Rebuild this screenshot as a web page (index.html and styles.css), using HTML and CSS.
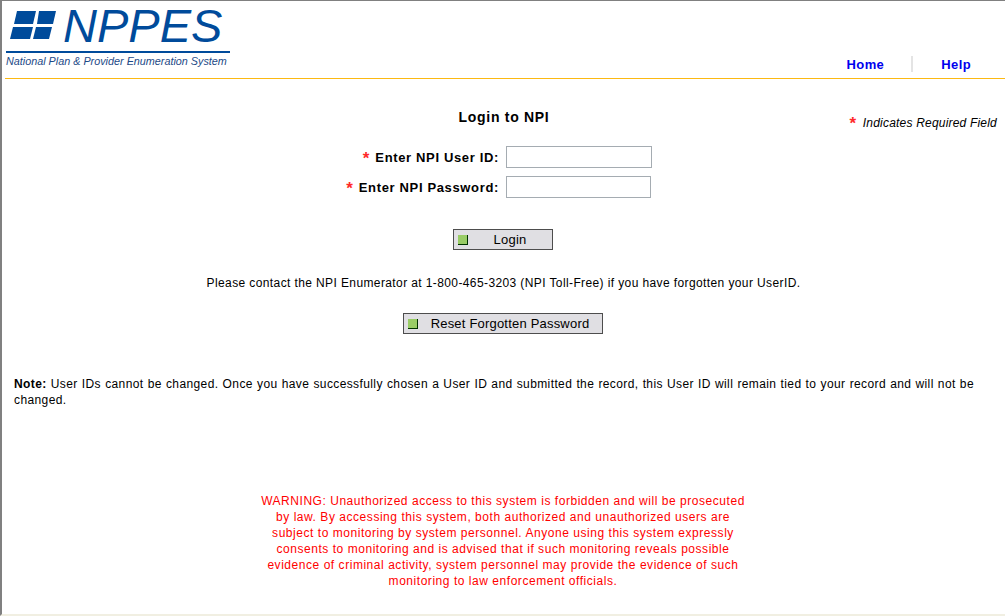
FILE: index.html
```html
<!DOCTYPE html>
<html lang="en">
  <head>
    <meta charset="UTF-8" />
    <title>NPPES Login</title>
    <link rel="stylesheet" href="styles.css">
  </head>
  <body>
    <div class="page">
      <div class="header">
        <div class="logo">
          <div class="logo-top">
            <svg class="logo-mark" width="46" height="28" viewBox="0 0 46 28">
              <polygon fill="#004b9b" points="7,0 26,0 23,13 4,13" />
              <polygon fill="#004b9b" points="29,0 46,0 43,13 27,13" />
              <polygon fill="#004b9b" points="3,16 23,16 20,28 0,28" />
              <polygon fill="#004b9b" points="26,16 42,16 39,28 23,28" />
            </svg>
            <span class="logo-name">NPPES</span>
          </div>
          <div class="logo-sub">National Plan &amp; Provider Enumeration System</div>
        </div>
        <div class="nav">
          <a class="nav-home" href="#">Home</a>
          <span class="nav-sep"></span>
          <a class="nav-help" href="#">Help</a>
        </div>
      </div>

      <div class="content">
        <p class="required-note"><span class="star">*</span> Indicates Required Field</p>
        <h1 class="title">Login to NPI</h1>

        <div class="field-row">
          <label class="field-label"><span class="star">*</span> Enter NPI User ID:</label>
          <input class="field-input user" type="text" />
        </div>
        <div class="field-row">
          <label class="field-label"><span class="star">*</span> Enter NPI Password:</label>
          <input class="field-input pass" type="password" />
        </div>

        <div class="login-wrap">
          <button class="btn login"><span class="bullet"></span><span class="btn-text">Login</span></button>
        </div>

        <p class="contact">Please contact the NPI Enumerator at 1-800-465-3203 (NPI Toll-Free) if you have forgotten your UserID.</p>

        <div class="reset-wrap">
          <button class="btn reset"><span class="bullet"></span><span class="btn-text">Reset Forgotten Password</span></button>
        </div>

        <p class="note"><b>Note:</b> User IDs cannot be changed. Once you have successfully chosen a User ID and submitted the record, this User ID will remain tied to your record and will not be changed.</p>

        <p class="warning">WARNING: Unauthorized access to this system is forbidden and will be prosecuted by law. By accessing this system, both authorized and unauthorized users are subject to monitoring by system personnel. Anyone using this system expressly consents to monitoring and is advised that if such monitoring reveals possible evidence of criminal activity, system personnel may provide the evidence of such monitoring to law enforcement officials.</p>
      </div>
    </div>
  </body>
</html>
```

FILE: styles.css
```css
html,
body {
  margin: 0;
  padding: 0;
  background-color: #ffffff;
}

body {
  font-family: "Liberation Sans", Arial, sans-serif;
  font-size: 12px;
  color: #000000;
}

.page {
  height: 613px;
  border-top: 1px solid #808080;
  border-left: 2px solid #808080;
  border-bottom: 2px solid #f1efe2;
  overflow: hidden;
}

.header {
  display: flex;
  justify-content: space-between;
  height: 77px;
  margin-left: 3px;
  border-bottom: 1px solid #fcb913;
}

.logo {
  width: 224px;
  padding-left: 1px;
}

.logo-top {
  display: flex;
  align-items: flex-start;
  height: 50px;
  border-bottom: 2px solid #004b9b;
}

.logo-mark {
  flex: none;
  margin: 10px 0 0 4px;
}

.logo-name {
  margin-left: 7px;
  font-size: 47px;
  line-height: 50px;
  font-style: italic;
  color: #004b9b;
}

.logo-sub {
  margin-top: 2px;
  font-size: 10.8px;
  font-style: italic;
  color: #1d4a87;
  white-space: nowrap;
}

.nav {
  display: flex;
  align-items: center;
  height: 16px;
  margin-top: 55px;
  padding-right: 34px;
  font-size: 13px;
  font-weight: bold;
  letter-spacing: 0.4px;
}

.nav a {
  color: #0000ee;
  text-decoration: none;
}

.nav-sep {
  width: 2px;
  height: 16px;
  margin: 0 28px 0 27px;
  background-color: #e4e4e4;
}

.content {
  position: relative;
  padding: 30px 4px 0 12px;
  letter-spacing: 0.39px;
}

.required-note {
  position: absolute;
  top: 37px;
  right: 8px;
  margin: 0;
  font-size: 12px;
  font-style: italic;
  letter-spacing: 0.2px;
}

.star {
  margin-right: 1px;
  color: #ff2a2a;
  font-size: 17px;
  font-style: normal;
  font-weight: bold;
  line-height: 12px;
  vertical-align: -2px;
}

.required-note .star {
  margin-right: 3px;
}

.title {
  margin: 0 7px 0 0;
  font-size: 14px;
  line-height: 16px;
  font-weight: bold;
  letter-spacing: 0.7px;
  text-align: center;
}

.field-row {
  display: flex;
  align-items: center;
  height: 22px;
  margin-top: 8px;
}

.title + .field-row {
  margin-top: 21px;
}

.field-label {
  width: 485px;
  font-size: 13px;
  font-weight: bold;
  letter-spacing: 0.65px;
  text-align: right;
  white-space: nowrap;
}

.field-input {
  box-sizing: border-box;
  height: 22px;
  margin: 0 0 0 7px;
  padding: 0;
  border: 1px solid #a5acb2;
  background-color: #ffffff;
}

.field-input.user {
  width: 146px;
}

.field-input.pass {
  width: 145px;
}

.login-wrap {
  margin: 31px 0 0 439px;
}

.btn {
  display: flex;
  align-items: center;
  box-sizing: border-box;
  height: 21px;
  padding: 0 0 0 4px;
  border: 1px solid #4d4d4d;
  background-color: #e0dfe3;
  font-family: "Liberation Sans", Arial, sans-serif;
  font-size: 13px;
  letter-spacing: 0.2px;
  color: #000000;
}

.btn.login {
  width: 100px;
}

.btn.reset {
  width: 200px;
}

.bullet {
  box-sizing: border-box;
  width: 10px;
  height: 10px;
  flex: none;
  background-color: #99cc66;
  border-right: 1px solid #003300;
  border-bottom: 1px solid #003300;
}

.btn-text {
  flex: 1;
  text-align: center;
}

.contact {
  margin: 26px 8px 0 0;
  line-height: 14px;
  text-align: center;
}

.reset-wrap {
  margin: 23px 0 0 389px;
}

.note {
  margin: 42px 27px 0 0;
  line-height: 16px;
  text-align: justify;
}

.warning {
  width: 490px;
  margin: 85px 0 0 244px;
  line-height: 16px;
  letter-spacing: 0.54px;
  color: #ff0000;
  text-align: center;
}
```
